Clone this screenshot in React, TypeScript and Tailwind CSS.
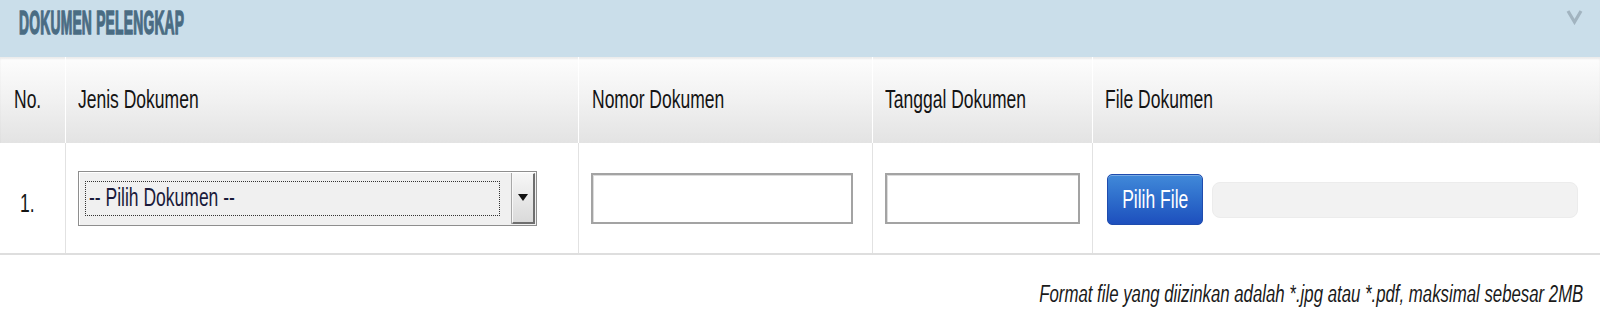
import React from 'react';

// squeezed text: the page is drawn with narrow glyphs
function Sq({ children, className = '' }: { children: React.ReactNode; className?: string }) {
  return <span className={`inline-block whitespace-nowrap origin-left scale-x-[0.7] ${className}`}>{children}</span>;
}

const cols = 'grid grid-cols-[66px_513px_294px_220px_1fr]';

export default function App() {
  return (
    <div className="w-[1600px] h-[321px] bg-white font-['Liberation_Sans',Arial,sans-serif] text-[#141414] overflow-hidden">
      {/* Panel header */}
      <div className="h-[57px] bg-[#cadeea] flex items-start justify-between pl-[19px] pr-[17px] pt-[6px]">
        <span className="inline-block whitespace-nowrap origin-left scale-x-[0.42] text-[33px] leading-[33px] font-bold text-[#4a6c83] [-webkit-text-stroke:1.5px_#4a6c83] tracking-[0.5px]">
          DOKUMEN PELENGKAP
        </span>
        <svg width="17" height="16" viewBox="0 0 17 16" className="mt-[3px]">
          <polyline points="2,2 8.5,13 15,2" fill="none" stroke="#a2b4c0" strokeWidth="3.2" strokeLinejoin="miter" />
        </svg>
      </div>

      {/* Table head */}
      <div className={`${cols} h-[86px] bg-linear-to-b from-[#fdfdfd] via-[#f1f1f1] to-[#e3e3e3] shadow-[inset_0_2px_2px_rgba(0,0,0,0.07)] text-[25px]`}>
        <div className="flex items-center pl-[14px] border-r border-white"><Sq>No.</Sq></div>
        <div className="flex items-center pl-[12px] border-r border-white"><Sq>Jenis Dokumen</Sq></div>
        <div className="flex items-center pl-[13px] border-r border-white"><Sq>Nomor Dokumen</Sq></div>
        <div className="flex items-center pl-[12px] border-r border-white"><Sq>Tanggal Dokumen</Sq></div>
        <div className="flex items-center pl-[12px]"><Sq>File Dokumen</Sq></div>
      </div>

      {/* Table row */}
      <div className={`${cols} h-[112px] border-b-2 border-[#dedede] text-[25px]`}>
        <div className="flex items-center pl-[20px] pt-[12px] border-r border-[#e2e2e2]"><Sq>1.</Sq></div>

        <div className="flex items-center pl-[12px] border-r border-[#e2e2e2]">
          <div className="w-[459px] h-[55px] flex border border-[#8e8e8e] bg-[#f0f0f0] shadow-[inset_1px_1px_0_#fff]">
            <div className="flex-1 flex items-center pl-[6px] pr-[12px]">
              <div className="w-full h-[35px] border border-dotted border-[#333] flex items-center pl-[3px]">
                <Sq className="text-[#1a1a3a]">-- Pilih Dokumen --</Sq>
              </div>
            </div>
            <div className="w-[23px] m-[1px] ml-0 flex items-center justify-center bg-linear-to-b from-[#f6f6f6] to-[#dadada] border-l border-t border-[#f8f8f8] border-r-2 border-b-2 border-r-[#6f6f6f] border-b-[#6f6f6f] shadow-[-1px_0_0_#a8a8a8]">
              <svg width="10" height="7" viewBox="0 0 10 7">
                <polygon points="0,0 10,0 5,7" fill="#111" />
              </svg>
            </div>
          </div>
        </div>

        <div className="flex items-center pl-[12px] border-r border-[#e2e2e2]">
          <div className="w-[262px] h-[51px] border-2 border-[#a3a3a3] bg-white shadow-[inset_1px_1px_0_#dcdcdc]" />
        </div>

        <div className="flex items-center pl-[12px] border-r border-[#e2e2e2]">
          <div className="w-[195px] h-[51px] border-2 border-[#a3a3a3] bg-white shadow-[inset_1px_1px_0_#dcdcdc]" />
        </div>

        <div className="flex items-center pl-[14px] gap-[9px] pt-[3px]">
          <button className="w-[96px] h-[51px] rounded-[5px] border border-[#1f4cae] bg-linear-to-b from-[#4189d9] to-[#1e4fbd] text-white text-[25px] flex items-center justify-center shadow-[inset_0_1px_0_rgba(255,255,255,0.3)]">
            <span className="inline-block whitespace-nowrap scale-x-[0.7]">Pilih File</span>
          </button>
          <div className="w-[366px] h-[36px] rounded-[8px] bg-[#f2f2f2] border border-[#ececec]" />
        </div>
      </div>

      {/* Note */}
      <div className="flex justify-end pr-[17px] pt-[22px]">
        <span className="inline-block whitespace-nowrap origin-right scale-x-[0.73] italic text-[23px] text-[#1a1a1a]">
          Format file yang diizinkan adalah *.jpg atau *.pdf, maksimal sebesar 2MB
        </span>
      </div>
    </div>
  );
}
